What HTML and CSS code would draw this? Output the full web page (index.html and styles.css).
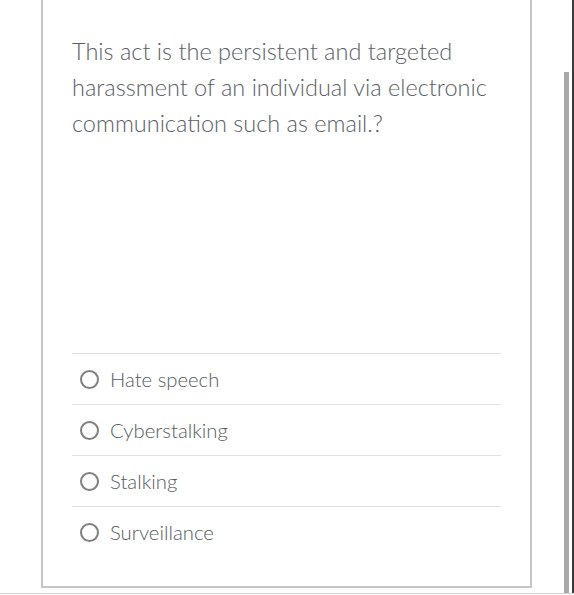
FILE: index.html
```html
<!DOCTYPE html>
<html>
<head>
<meta charset="utf-8">
<link rel="stylesheet" href="styles.css">
</head>
<body>
<div class="viewport">
  <div class="main">
    <div class="card">
      <p class="question">This act is the persistent and targeted harassment of an individual via electronic communication such as email.?</p>
      <ul class="answers">
        <li class="answer"><span class="radio"></span><span class="label">Hate speech</span></li>
        <li class="answer"><span class="radio"></span><span class="label">Cyberstalking</span></li>
        <li class="answer"><span class="radio"></span><span class="label">Stalking</span></li>
        <li class="answer"><span class="radio"></span><span class="label">Surveillance</span></li>
      </ul>
    </div>
  </div>
  <div class="gutter">
    <div class="thumb"></div>
    <div class="edge"></div>
  </div>
</div>
</body>
</html>
```
FILE: styles.css
```css
html, body {
  margin: 0;
  padding: 0;
  background: #fff;
}
body {
  font-family: Lato, "Open Sans", sans-serif;
}
.viewport {
  display: flex;
  height: 593px;
  border-bottom: 1px solid #d4d4d4;
}
.main {
  width: 532px;
  padding-left: 41px;
  box-sizing: border-box;
}
.card {
  height: 588px;
  box-sizing: border-box;
  border: 2px solid #c6c6c6;
  border-top: none;
  padding: 33px 29px 0 29px;
}
.question {
  margin: 0;
  font-size: 23.5px;
  font-weight: 300;
  line-height: 36px;
  color: #596066;
  height: 320px;
}
.answers {
  list-style: none;
  margin: 0;
  padding: 0;
}
.answer {
  display: flex;
  align-items: center;
  height: 50px;
  border-top: 1px solid #e2e2e2;
  padding-left: 8px;
  font-size: 20.3px;
  font-weight: 300;
  color: #565b60;
}
.radio {
  width: 15px;
  height: 15px;
  border: 2px solid #7f7f7f;
  border-radius: 50%;
  margin-right: 11px;
  flex: none;
}
.gutter {
  flex: 1;
  display: flex;
  padding-left: 32px;
}
.thumb {
  width: 5px;
  margin-top: 72px;
  background: #a9a9a9;
  margin-right: 3px;
}
.edge {
  width: 2px;
  background: #3a3a3a;
}
```
